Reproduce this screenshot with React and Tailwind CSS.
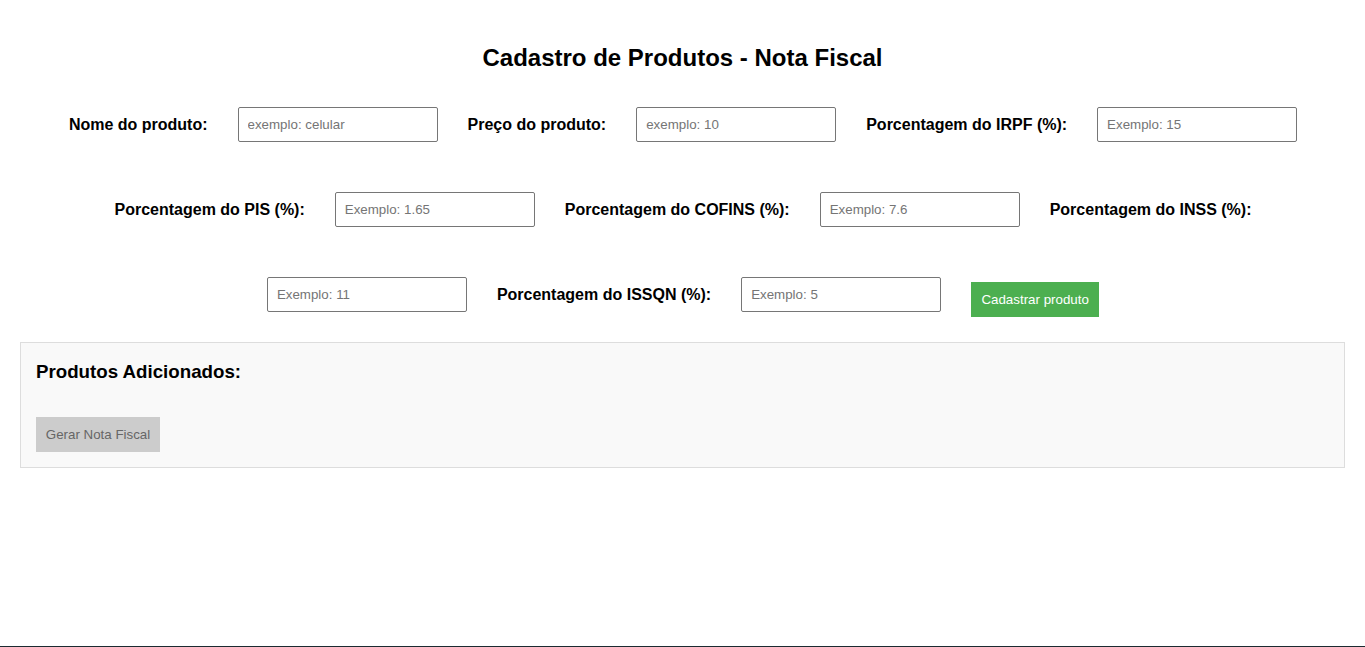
import React from "react";

const font = { fontFamily: '"Liberation Sans", Arial, sans-serif' };

function Label({ children }) {
  return (
    <label className="h-[35px] flex items-center text-[16px] font-bold text-black leading-none whitespace-nowrap">
      {children}
    </label>
  );
}

function Input({ placeholder }) {
  return (
    <input
      type="text"
      placeholder={placeholder}
      className="w-[200px] h-[35px] border border-[#767676] rounded-[2px] px-[9px] text-[13.33px] text-black placeholder:text-[#757575] bg-white outline-none"
      style={font}
    />
  );
}

export default function App() {
  return (
    <div className="min-h-[647px] flex flex-col bg-white" style={font}>
      <div className="flex-1">
        <h2 className="pt-[44px] text-center text-[24px] leading-[28px] font-bold text-black">
          Cadastro de Produtos - Nota Fiscal
        </h2>
        <form className="mt-[35px] flex flex-wrap justify-center items-start gap-x-[30px] gap-y-[50px] pl-[21px] pr-[20px]">
          <Label>Nome do produto:</Label>
          <Input placeholder="exemplo: celular" />
          <Label>Preço do produto:</Label>
          <Input placeholder="exemplo: 10" />
          <Label>Porcentagem do IRPF (%):</Label>
          <Input placeholder="Exemplo: 15" />
          <Label>Porcentagem do PIS (%):</Label>
          <Input placeholder="Exemplo: 1.65" />
          <Label>Porcentagem do COFINS (%):</Label>
          <Input placeholder="Exemplo: 7.6" />
          <Label>Porcentagem do INSS (%):</Label>
          <Input placeholder="Exemplo: 11" />
          <Label>Porcentagem do ISSQN (%):</Label>
          <Input placeholder="Exemplo: 5" />
          <button
            type="button"
            className="mt-[5px] w-[128px] h-[35px] bg-[#4caf50] text-white text-[13.33px] flex items-center justify-center"
          >
            Cadastrar produto
          </button>
        </form>
        <div className="mx-[20px] mt-[25px] border border-[#dddddd] bg-[#f9f9f9] px-[15px] pt-[18px] pb-[15px]">
          <h3 className="text-[18.72px] leading-[22px] font-bold text-black">
            Produtos Adicionados:
          </h3>
          <button
            type="button"
            className="mt-[34px] w-[124px] h-[35px] bg-[#cccccc] text-[#666666] text-[13.33px] flex items-center justify-center"
          >
            Gerar Nota Fiscal
          </button>
        </div>
      </div>
      <div className="h-[1px] bg-[#1b2a31]" />
    </div>
  );
}
